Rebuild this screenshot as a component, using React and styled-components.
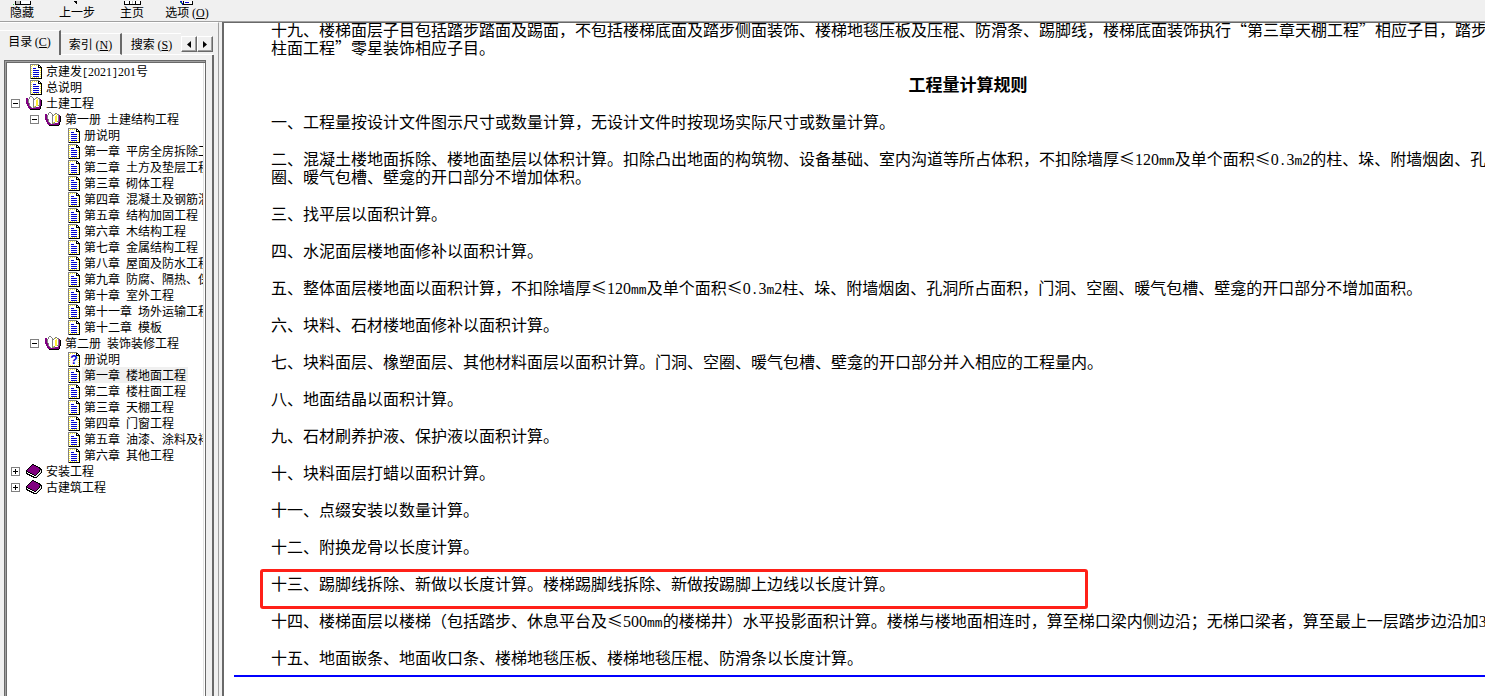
import React, { useState } from 'react';
import styled, { createGlobalStyle } from 'styled-components';

const GlobalStyle = createGlobalStyle`
  * {
    box-sizing: border-box;
  }

  body {
    margin: 0;
    background: #f0f0f0;
    color: #000;
    font-family: "Noto Sans CJK SC", sans-serif;
    font-size: 12px;
  }

  button {
    font: inherit;
    color: inherit;
    padding: 0;
    border: 0;
    background: none;
  }
`;

const Shell = styled.div`
  display: flex;
  flex-direction: column;
  height: 100vh;
  overflow: hidden;
`;

const Toolbar = styled.header`
  display: flex;
  align-items: flex-end;
  flex: none;
  height: 22px;
  overflow: hidden;
  border-bottom: 1px solid #a0a0a0;
`;

const ToolButton = styled.button`
  display: flex;
  flex-direction: column;
  align-items: center;
  width: ${props => props.$wide ? '66px' : '44px'};
  line-height: 14px;
  padding-bottom: 2px;
  white-space: nowrap;
`;

const Main = styled.div`
  display: flex;
  flex: 1;
  min-height: 0;
`;

const Navigation = styled.nav`
  display: flex;
  flex-direction: column;
  flex: none;
  width: 219px;
  padding-right: 4px;
  border-top: 1px solid #fff;
  border-right: 1px solid #a0a0a0;
`;

const TabBar = styled.div`
  display: flex;
  align-items: flex-end;
  height: 32px;
  margin-right: 1px;
`;

const Tab = styled.button`
  flex: 1;
  height: ${props => props.$active ? '25px' : '22px'};
  line-height: 20px;
  white-space: nowrap;
  border-top: 1px solid #fff;
  border-right: ${props => props.$last ? '0' : '2px solid #696969'};
  border-bottom: ${props => props.$active ? '0' : '1px solid #fff'};
  padding-bottom: ${props => props.$active ? '4px' : '2px'};
`;

const TabScroll = styled.div`
  display: flex;
  height: 19px;
  border-bottom: 1px solid #fff;
`;

const ScrollButton = styled.button`
  display: flex;
  align-items: center;
  justify-content: center;
  width: 16px;
  height: 16px;
  border: 1px solid;
  border-color: #fff #696969 #696969 #fff;
  box-shadow: inset -1px -1px 0 #a0a0a0;
`;

const TabPanel = styled.div`
  display: flex;
  flex: 1;
  min-height: 0;
  padding: 5px 6px 0 4px;
  border-right: 2px solid #696969;
`;

const TreeFrame = styled.div`
  flex: 1;
  min-width: 0;
  background: #fff;
  border: 1px solid #696969;
  border-bottom: 0;
  box-shadow: inset 1px 1px 0 #a0a0a0, inset 2px 2px 0 #696969;
  padding: 2px 1px 0 2px;
`;

const Tree = styled.ul`
  height: 100%;
  margin: 0;
  padding: 0;
  list-style: none;
  overflow: hidden;
  border-right: 1px solid #e3e3e3;
`;

const TreeRow = styled.li`
  display: flex;
  align-items: center;
  height: 16px;
  padding-left: ${props => 4 + props.$level * 19}px;
`;

const Expander = styled.button`
  display: flex;
  flex: none;
  width: 9px;
  height: 9px;
`;

const ExpanderSpace = styled.span`
  flex: none;
  width: 9px;
`;

const IconCell = styled.span`
  display: flex;
  flex: none;
  justify-content: flex-end;
  width: 22px;
`;

const TreeLabel = styled.a`
  flex: none;
  margin-left: 2px;
  padding: 0 2px;
  line-height: 16px;
  color: #000;
  text-decoration: none;
  white-space: pre;
  background: ${props => props.$selected ? '#f0f0f0' : 'none'};
`;

const Latin = styled.span`
  font-family: "Liberation Mono", monospace;
  font-size: ${props => props.$large ? '13px' : '10px'};
  line-height: 0;
  white-space: pre;
`;

const Serif = styled.span`
  font-family: "Liberation Serif", serif;
  line-height: 0;
`;

const ContentPane = styled.main`
  flex: 1;
  min-width: 0;
  margin-left: 3px;
  overflow: hidden;
  background: #fff;
  border-top: 1px solid #696969;
  border-left: 2px solid #696969;
`;

const Page = styled.article`
  width: 118%;
  margin-top: -3px;
  padding: 0 10px;
  font-size: 16px;
  line-height: 18px;
  white-space: nowrap;
`;

const PageBody = styled.div`
  display: flex;
  flex-direction: column;
  gap: 19px;
  padding: 0 37px;
`;

const Heading = styled.h1`
  margin: 0;
  font-size: 17px;
  line-height: 18px;
  text-align: center;
`;

const Paragraph = styled.p`
  position: relative;
  margin: 0;
`;

const Line = styled.span`
  display: block;
  height: 18px;
`;

const Highlight = styled.span`
  position: absolute;
  top: -5px;
  left: -11px;
  width: 828px;
  height: 40px;
  border: 3px solid #ff2018;
  border-radius: 3px;
  pointer-events: none;
`;

const Rule = styled.hr`
  height: 2px;
  margin: 9px 0 0;
  border: 0;
  background: #0000ff;
`;

const PALETTE = {
  k: '#000',
  g: '#808080',
  l: '#c0c0c0',
  w: '#fff',
  y: '#ffee30',
  b: '#0000d0',
  p: '#800080',
  n: '#30c030',
};

const PAGE_BITMAP = [
  'ggggggggg...',
  'gwywywywkk..',
  'gywwwwwwkwk.',
  'gwwwwwwwkkkk',
  'gywbbbwwwwyk',
  'gwwwwwwwwwwk',
  'gywbbbbbbwyk',
  'gwwwwwwwwwwk',
  'gywbbbbbbwyk',
  'gwwwwwwwwwwk',
  'gywbbbbbbwyk',
  'gwwwwwwwwwwk',
  'gywbbbbbbwyk',
  'gwywywywywwk',
  'gkkkkkkkkkkk',
];

const OPEN_BOOK_BITMAP = [
  '....gg..........',
  '...gwwg...gg....',
  'pp.gwwwg.gywgg..',
  'ppgwwwwggwwywgp.',
  'ppgwwwwgwwyywgpk',
  'ppgwwwwgwwyywgpk',
  'ppgwwwwgwwyywgpk',
  'pppgwwwgwwyywgpk',
  '.ppgwwwgwwyywgpk',
  '.ppgwwwgwwyyggpk',
  '..ppgwwgygwwwpk.',
  '..pppgwgggppppk.',
  '...pppppppppppk.',
  '....kkkkkkkkkk..',
];

const CLOSED_BOOK_BITMAP = [
  '......kk........',
  '.....kppkk......',
  '....kpppppkk....',
  '...kppppppppkk..',
  '..kppppppppppkk.',
  '.kppppppppppppkk',
  'kppppppppppppklk',
  'kkpppppppppppkwk',
  'kwkkppppppppkwlk',
  'kkwwkkpppppkwlk.',
  '.kkkwwkkppkwlk..',
  '...kkkwwkkwlk...',
  '.....kkkwwlk....',
  '.......kkkk.....',
];

const HIDE_BITMAP = [
  '..kllllkwwwwwwwwwk',
  '..kllllkwwwwwwwwwk',
  '..kllllkwwwwwwwwwk',
  'n.kkkkkkkkkkkkkkkk',
];

const BACK_BITMAP = [
  'kkk...',
  '.kk...',
  '..k...',
  '......',
];

const HOME_BITMAP = [
  'kwwwwkwwlwwkwwwwk',
  'kwwwwkwwlwwkwwwwk',
  'kwwwwkwwlwwkwwwwk',
  'kkkkkkkkkkkkkkkkk',
];

const OPTIONS_BITMAP = [
  'bb.kwwwwwwwwk.',
  'nb.kwbbbbwwwk.',
  '.nbkwwwwwwwwk.',
  '..bkkkkkkkkkk.',
];

function PixelIcon({ rows, glyph }) {
  return (
    <svg
      width={rows[0].length}
      height={rows.length}
      viewBox={`0 0 ${rows[0].length} ${rows.length}`}
      shapeRendering="crispEdges"
      aria-hidden="true"
    >
      {rows.map((row, y) => row.split('').map((key, x) => (
        key === '.' || (glyph && key === 'b')
          ? null
          : <rect key={`${x}-${y}`} x={x} y={y} width="1" height="1" fill={PALETTE[key]} />
      )))}
      {glyph && <rect x="3" y="4" width="6" height="9" fill="#fff" />}
      {glyph && (
        <text x="6" y="12" textAnchor="middle" fontSize="12" fontWeight="700" fontFamily="Liberation Sans" fill="#0000d0">
          {glyph}
        </text>
      )}
    </svg>
  );
}

/* half-width runs: each letter or digit takes half of a full character */
function Mixed({ text, large }) {
  return text.split(/(\d+|[\x20-\x2f\x3a-\x7e]+)/).map((part, i) => {
    if (i % 2 === 0) return part;
    if (/\d/.test(part)) return <Serif key={i}>{part}</Serif>;
    return <Latin key={i} $large={large}>{part}</Latin>;
  });
}

function AccessKey({ letter }) {
  return <Serif>(<u>{letter}</u>)</Serif>;
}

const TREE = [
  { level: 0, icon: 'page', text: '京建发[2021]201号' },
  { level: 0, icon: 'page', text: '总说明' },
  { level: 0, icon: 'open', text: '土建工程' },
  { level: 1, icon: 'open', text: '第一册 土建结构工程' },
  { level: 2, icon: 'page', text: '册说明' },
  { level: 2, icon: 'page', text: '第一章 平房全房拆除工程' },
  { level: 2, icon: 'page', text: '第二章 土方及垫层工程' },
  { level: 2, icon: 'page', text: '第三章 砌体工程' },
  { level: 2, icon: 'page', text: '第四章 混凝土及钢筋混凝土工程' },
  { level: 2, icon: 'page', text: '第五章 结构加固工程' },
  { level: 2, icon: 'page', text: '第六章 木结构工程' },
  { level: 2, icon: 'page', text: '第七章 金属结构工程' },
  { level: 2, icon: 'page', text: '第八章 屋面及防水工程' },
  { level: 2, icon: 'page', text: '第九章 防腐、隔热、保温工程' },
  { level: 2, icon: 'page', text: '第十章 室外工程' },
  { level: 2, icon: 'page', text: '第十一章 场外运输工程' },
  { level: 2, icon: 'page', text: '第十二章 模板' },
  { level: 1, icon: 'open', text: '第二册 装饰装修工程' },
  { level: 2, icon: 'help', text: '册说明' },
  { level: 2, icon: 'page', text: '第一章 楼地面工程' },
  { level: 2, icon: 'page', text: '第二章 楼柱面工程' },
  { level: 2, icon: 'page', text: '第三章 天棚工程' },
  { level: 2, icon: 'page', text: '第四章 门窗工程' },
  { level: 2, icon: 'page', text: '第五章 油漆、涂料及裱糊工程' },
  { level: 2, icon: 'page', text: '第六章 其他工程' },
  { level: 0, icon: 'closed', text: '安装工程' },
  { level: 0, icon: 'closed', text: '古建筑工程' },
];

const BITMAPS = {
  page: PAGE_BITMAP,
  help: PAGE_BITMAP,
  open: OPEN_BOOK_BITMAP,
  closed: CLOSED_BOOK_BITMAP,
};

const RULES = [
  ['一、工程量按设计文件图示尺寸或数量计算，无设计文件时按现场实际尺寸或数量计算。'],
  [
    '二、混凝土楼地面拆除、楼地面垫层以体积计算。扣除凸出地面的构筑物、设备基础、室内沟道等所占体积，不扣除墙厚≤120mm及单个面积≤0.3m2的柱、垛、附墙烟囱、孔',
    '圈、暖气包槽、壁龛的开口部分不增加体积。',
  ],
  ['三、找平层以面积计算。'],
  ['四、水泥面层楼地面修补以面积计算。'],
  ['五、整体面层楼地面以面积计算，不扣除墙厚≤120mm及单个面积≤0.3m2柱、垛、附墙烟囱、孔洞所占面积，门洞、空圈、暖气包槽、壁龛的开口部分不增加面积。'],
  ['六、块料、石材楼地面修补以面积计算。'],
  ['七、块料面层、橡塑面层、其他材料面层以面积计算。门洞、空圈、暖气包槽、壁龛的开口部分并入相应的工程量内。'],
  ['八、地面结晶以面积计算。'],
  ['九、石材刷养护液、保护液以面积计算。'],
  ['十、块料面层打蜡以面积计算。'],
  ['十一、点缀安装以数量计算。'],
  ['十二、附换龙骨以长度计算。'],
  ['十三、踢脚线拆除、新做以长度计算。楼梯踢脚线拆除、新做按踢脚上边线以长度计算。'],
  ['十四、楼梯面层以楼梯（包括踏步、休息平台及≤500mm的楼梯井）水平投影面积计算。楼梯与楼地面相连时，算至梯口梁内侧边沿；无梯口梁者，算至最上一层踏步边沿加300mm'],
  ['十五、地面嵌条、地面收口条、楼梯地毯压板、楼梯地毯压棍、防滑条以长度计算。'],
];

const HIGHLIGHTED = 12;

function Lines({ lines }) {
  return lines.map(line => (
    <Line key={line}><Mixed text={line} large /></Line>
  ));
}

function TreeItem({ item, selected, onSelect }) {
  const isBook = item.icon === 'open' || item.icon === 'closed';

  return (
    <TreeRow $level={item.level}>
      {isBook ? (
        <Expander aria-label={item.icon === 'open' ? '折叠' : '展开'}>
          <svg width="9" height="9" viewBox="0 0 9 9" shapeRendering="crispEdges">
            <path d="M0 0h9v9h-9z" fill="#808080" />
            <path d="M1 1h7v7h-7z" fill="#fff" />
            <path d={item.icon === 'open' ? 'M2 4h5v1h-5z' : 'M2 4h5v1h-5zM4 2h1v5h-1z'} fill="#000" />
          </svg>
        </Expander>
      ) : <ExpanderSpace />}
      <IconCell>
        <PixelIcon rows={BITMAPS[item.icon]} glyph={item.icon === 'help' ? '?' : null} />
      </IconCell>
      <TreeLabel href="#" $selected={selected} onClick={onSelect}>
        <Mixed text={item.text} />
      </TreeLabel>
    </TreeRow>
  );
}

function App() {
  const [selected, setSelected] = useState(19);

  return (
    <Shell lang="zh-CN">
      <GlobalStyle />
      <Toolbar>
        <ToolButton><PixelIcon rows={HIDE_BITMAP} />隐藏</ToolButton>
        <ToolButton $wide><PixelIcon rows={BACK_BITMAP} />上一步</ToolButton>
        <ToolButton><PixelIcon rows={HOME_BITMAP} />主页</ToolButton>
        <ToolButton $wide><PixelIcon rows={OPTIONS_BITMAP} /><span>选项 <AccessKey letter="O" /></span></ToolButton>
      </Toolbar>
      <Main>
        <Navigation>
          <TabBar>
            <Tab $active>目录 <AccessKey letter="C" /></Tab>
            <Tab>索引 <AccessKey letter="N" /></Tab>
            <Tab $last>搜索 <AccessKey letter="S" /></Tab>
            <TabScroll>
              <ScrollButton aria-label="向左">
                <svg width="4" height="7" viewBox="0 0 4 7"><path d="M4 0v7L0 3.5z" /></svg>
              </ScrollButton>
              <ScrollButton aria-label="向右">
                <svg width="4" height="7" viewBox="0 0 4 7"><path d="M0 0v7l4-3.5z" /></svg>
              </ScrollButton>
            </TabScroll>
          </TabBar>
          <TabPanel>
            <TreeFrame>
              <Tree>
                {TREE.map((item, i) => (
                  <TreeItem key={i} item={item} selected={i === selected} onSelect={() => setSelected(i)} />
                ))}
              </Tree>
            </TreeFrame>
          </TabPanel>
        </Navigation>
        <ContentPane>
          <Page>
            <PageBody>
              <Paragraph>
                <Lines
                  lines={[
                    '十九、楼梯面层子目包括踏步踏面及踢面，不包括楼梯底面及踏步侧面装饰、楼梯地毯压板及压棍、防滑条、踢脚线，楼梯底面装饰执行“第三章天棚工程”相应子目，踏步',
                    '柱面工程”零星装饰相应子目。',
                  ]}
                />
              </Paragraph>
              <Heading>工程量计算规则</Heading>
              {RULES.map((lines, i) => (
                <Paragraph key={i}>
                  <Lines lines={lines} />
                  {i === HIGHLIGHTED && <Highlight />}
                </Paragraph>
              ))}
            </PageBody>
            <Rule />
          </Page>
        </ContentPane>
      </Main>
    </Shell>
  );
}

export default App;
